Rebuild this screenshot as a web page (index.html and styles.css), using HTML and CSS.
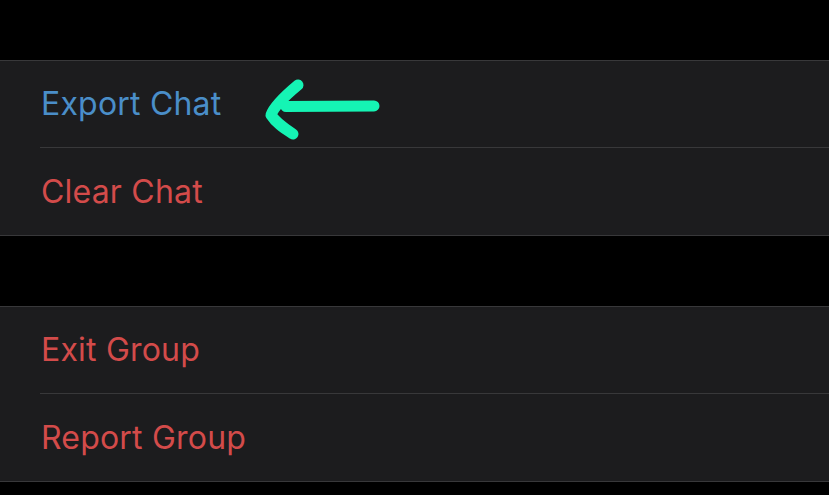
FILE: index.html
```html
<!DOCTYPE html>
<html lang="en">
<head>
<meta charset="utf-8">
<title>Chat options</title>
<link rel="stylesheet" href="styles.css">
</head>
<body>
<main class="screen">
  <section class="group">
    <div class="row">
      <div class="cell">
        <span class="label label-blue">Export Chat</span>
        <svg class="arrow" width="130" height="70" viewBox="255 75 130 70" aria-hidden="true">
          <path d="M298 85 C 286 95 274 106 271 115 C 276 123 284 128 293 134" fill="none" stroke="#15f4b4" stroke-width="11" stroke-linecap="round" stroke-linejoin="round"/>
          <path d="M286 106.5 L 374 106" fill="none" stroke="#15f4b4" stroke-width="11" stroke-linecap="round"/>
        </svg>
      </div>
    </div>
    <div class="row row-last">
      <div class="cell cell-sep">
        <span class="label label-red">Clear Chat</span>
      </div>
    </div>
  </section>
  <section class="group">
    <div class="row">
      <div class="cell">
        <span class="label label-red">Exit Group</span>
      </div>
    </div>
    <div class="row row-last">
      <div class="cell cell-sep">
        <span class="label label-red">Report Group</span>
      </div>
    </div>
  </section>
</main>
</body>
</html>
```
FILE: styles.css
```css
html, body {
  margin: 0;
  padding: 0;
  background: #000;
}
.screen {
  width: 829px;
  height: 495px;
  overflow: hidden;
  padding-top: 60px;
  box-sizing: border-box;
  display: flex;
  flex-direction: column;
  gap: 70px;
  font-family: Inter, "Liberation Sans", sans-serif;
}
.group {
  background: #1c1c1e;
  border-top: 1px solid #38383a;
  border-bottom: 1px solid #38383a;
}
.row {
  padding-left: 40px;
}
.cell {
  position: relative;
  height: 86px;
  display: flex;
  align-items: center;
}
.row-last .cell {
  height: 87px;
}
.cell-sep {
  border-top: 1px solid #38383a;
}
.label {
  font-size: 32px;
  line-height: 1;
  letter-spacing: 0.2px;
  padding-left: 1px;
}
.label-blue {
  color: #4a8ec9;
}
.label-red {
  color: #d34b4a;
}
.arrow {
  position: absolute;
  left: 215px;
  top: 14px;
}
```
